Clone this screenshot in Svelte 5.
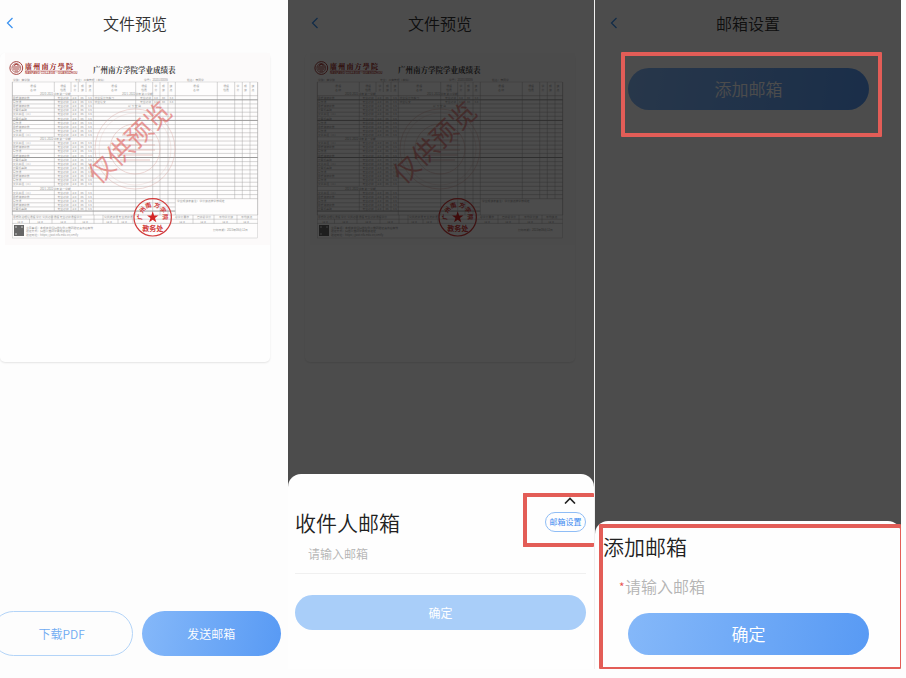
<script>
  let recipient = $state('');
  let newMailbox = $state('');

  const pitch = 4.12;
  const firstRow = 95.7;
  const rowLines = Array.from({ length: 29 }, (_, i) => firstRow + i * pitch);
  const darkLines = [1, 6, 15, 28];
  const columns = [12.3, 54.3, 71, 78.3, 86, 93.3, 135.7, 152.7, 160, 168, 175.3, 217.3, 234.7, 242.3, 250, 257.7];
  const semesterRows = [10, 22];
  const names = ['思想道德修养', '高等数学应用', '大学英语（一）', '计算机基础', '体育一', '军训', '写作课', '管理学基础课', '中国近代史', '大学英语（二）', '专业导论课', '学期合计'];
  const courses = Array.from({ length: 28 }, (_, i) => ({ row: i, name: names[(i * 5 + (i % 3)) % 12] }))
    .filter((c) => !semesterRows.includes(c.row));
  const heads = [33, 114, 196];
  const sealChars = [
    ['广', -88], ['州', -54], ['南', -20], ['方', 20], ['学', 54], ['院', 88]
  ];
</script>

{#snippet back()}
  <button class="back" aria-label="返回">
    <svg width="8" height="12" viewBox="0 0 8 12"><path d="M6.5 1 1.5 6l5 5" /></svg>
  </button>
{/snippet}

{#snippet transcript()}
  <svg class="paper" viewBox="0 53 270 192" role="img" aria-label="广州南方学院学业成绩表">
    <rect x="5" y="53" width="265" height="192" fill="#fcfafa" />
    <rect x="12.3" y="82" width="245.4" height="156" fill="#fefdfd" />

    <g fill="none" stroke="#a5433f">
      <circle cx="16.3" cy="68" r="6.4" stroke-width="1" />
      <circle cx="16.3" cy="68" r="4.4" stroke-width=".7" />
      <path d="M12.5 67h7.600M13 69h6.600M14 65.500l2.300-1.500 2.300 1.500M14.500 71h3.600" stroke-width="1.200" />
    </g>
    {#each ['廣', '州', '南', '方', '學', '院'] as char, i}
      <text x={25 + i * 8.2} y="69" class="brand">{char}</text>
    {/each}
    <path d="M25 71h47" stroke="#b4433f" stroke-width=".5" />
    <text x="25" y="74.300" class="brand-en">NANFANG COLLEGE · GUANGZHOU</text>
    <text x="93" y="72.500" class="doc-title">广州南方学院学业成绩表</text>

    <g class="tiny">
      <text x="13" y="80.500">学院：商学院</text>
      <text x="75" y="80.500">专业：工商管理（本科）</text>
      <text x="144" y="80.500">学号：2020100086</text>
      <text x="187" y="80.500">姓名：李同学</text>
      {#each heads as x}
        <text {x} y="87" text-anchor="middle">课 程</text>
        <text {x} y="90.500" text-anchor="middle">名 称</text>
        <text x={x + 30} y="87" text-anchor="middle">课程</text>
        <text x={x + 30} y="90.500" text-anchor="middle">性质</text>
        {#each [['学', '分'], ['成', '绩'], ['绩', '点']] as pair, i}
          <text x={x + 42 + i * 7.500} y="87" text-anchor="middle">{pair[0]}</text>
          <text x={x + 42 + i * 7.500} y="90.500" text-anchor="middle">{pair[1]}</text>
        {/each}
      {/each}
      <text x="40" y="94.800">2020-2021学年 第一学期</text>
      <text x="122" y="94.800">2021-2022学年 第二学期</text>
      <text x="128" y="107">以 下 空 白</text>
      {#each courses as c}
        <text x="12.800" y={firstRow + c.row * pitch + 3.200}>{c.name}</text>
        <text x="57.500" y={firstRow + c.row * pitch + 3.200}>专业必修</text>
        <text x="72.500" y={firstRow + c.row * pitch + 3.200}>2.0</text>
        <text x="80.500" y={firstRow + c.row * pitch + 3.200}>85</text>
        <text x="88" y={firstRow + c.row * pitch + 3.200}>3.5</text>
      {/each}
      {#each semesterRows as r}
        <text x="40" y={firstRow + r * pitch + 3.200}>2021-2022学年 第一学期</text>
      {/each}
      {#each [0, 1] as r}
        <text x="94.500" y={firstRow + r * pitch + 3.200}>{r ? '毕业论文' : '毕业设计与实习'}</text>
        <text x="140" y={firstRow + r * pitch + 3.200}>专业必修</text>
        <text x="154" y={firstRow + r * pitch + 3.200}>4.0</text>
        <text x="162" y={firstRow + r * pitch + 3.200}>88</text>
        <text x="169.500" y={firstRow + r * pitch + 3.200}>3.8</text>
      {/each}
      <text x="177" y="201.500">学业成绩表备注：学分绩点按学校规定</text>
      <text x="13" y="218.300">思想政治理论课程 学分 公共必修课程 专业必修课程学分</text>
      <text x="104" y="218.300">公共选修课 专业选修课</text>
      <text x="175" y="218.300">总学分要求</text><text x="197" y="218.300">已修总学分</text>
      <text x="219" y="218.300">平均学分绩</text><text x="241" y="218.300">平均绩点</text>
      {#each [20, 40, 63, 85, 109, 124, 182, 203, 225, 246] as x}
        <text {x} y="222.500" text-anchor="middle">12.0</text>
      {/each}
      <text x="26" y="228.500">注意事项：本成绩单经扫描左侧二维码验证真伪后有效</text>
      <text x="26" y="232">验证方式：扫描二维码登录成绩验证</text>
      <text x="26" y="235.500">验证网址：https://jwxt.nfu.edu.cn/verify</text>
      <text x="213" y="230.500">打印日期：2023年06月12日</text>
    </g>

    <g stroke="#9b9999" stroke-width=".4" fill="none">
      <rect x="12.300" y="82" width="245.400" height="156" stroke="#bbb" />
      {#each rowLines as y, i}
        <path d="M12.300 {y}H{i > 25 ? 175.300 : 257.700}" stroke={darkLines.includes(i) ? '#555' : '#989696'} stroke-width={darkLines.includes(i) ? 0.600 : 0.400} />
      {/each}
      {#each columns as x, i}
        {#if i > 0 && i < 5}
          <path d="M{x} 82v10M{x} 95.700v41.200M{x} 141v45.300M{x} 190.500v20.500" />
        {:else}
          <path d="M{x} 82V{i > 10 && i < 15 ? 198.700 : 215}" />
        {/if}
      {/each}
      <path d="M12.300 215h245.400M12.300 219.200h245.400M12.300 223.400h245.400" />
      <path d="M29.500 219v4.400M52 215v8.400M75 219v4.400M94 215v8.400M103 215v8.400M118 219v4.400M133 215v8.400M171 215v8.400M193 215v8.400M214 215v8.400M237 215v8.400" />
    </g>

    <rect x="14" y="225" width="10" height="11" fill="#666" />
    <path d="M15 226h2v2h-2zM21 226h2v2h-2zM15 233h2v2h-2z" fill="#999" />

    <g fill="none" stroke="#d9a6a0" opacity=".4">
      <circle cx="135" cy="149" r="40" stroke-width="1" />
      <circle cx="135" cy="149" r="36" stroke-width=".5" />
      <circle cx="135" cy="149" r="25" stroke-width="1" />
      <path d="M117 140h36M115 145h40M115 150h40M117 155h36M120 160h30M122 135h26" stroke-width="1.500" />
    </g>
    <text class="watermark" transform="translate(130 143) rotate(-44)" text-anchor="middle" y="9">仅供预览</text>

    <g transform="translate(152.700 217.300)">
      <circle r="18.700" fill="none" stroke="#d23c3c" stroke-width="1.200" />
      <path d="M0-6 1.400-1.900h4.300L2.300.7l1.300 4.200L0 2.400l-3.600 2.500 1.300-4.200-3.400-2.600h4.300z" fill="#d32525" />
      {#each sealChars as [char, angle]}
        <text class="seal" transform="rotate({angle})" y="-10.500" text-anchor="middle">{char}</text>
      {/each}
      <text class="seal base" y="13.500" text-anchor="middle">教务处</text>
    </g>
  </svg>
{/snippet}

<main>
  <section class="phone preview">
    <div class="screen">
      <header>{@render back()}<h1>文件预览</h1></header>
      <div class="card">{@render transcript()}</div>
    </div>
    <footer>
      <button class="outline">下载PDF</button>
      <button class="solid">发送邮箱</button>
    </footer>
  </section>

  <section class="phone sending">
    <div class="dimmed">
      <div class="screen">
        <header>{@render back()}<h1>文件预览</h1></header>
        <div class="card">{@render transcript()}</div>
      </div>
    </div>
    <form class="sheet">
      <div class="sheet-head">
        <h2>收件人邮箱</h2>
        <div class="tools">
          <button type="button" class="close" aria-label="关闭">
            <svg width="12" height="7" viewBox="0 0 12 7"><path d="m1 6.500 5-5 5 5" /></svg>
          </button>
          <button type="button" class="settings">邮箱设置</button>
        </div>
      </div>
      <input type="email" aria-label="收件人邮箱" placeholder="请输入邮箱" bind:value={recipient} />
      <button type="button" class="confirm-light">确定</button>
      <span class="mark mark-settings"></span>
    </form>
  </section>

  <section class="phone adding">
    <div class="dimmed">
      <div class="screen">
        <header>{@render back()}<h1>邮箱设置</h1></header>
        <button class="solid large">添加邮箱</button>
      </div>
      <span class="mark mark-add"></span>
    </div>
    <form class="sheet">
      <h2>添加邮箱</h2>
      <label><span class="star">*</span><input type="email" aria-label="邮箱" placeholder="请输入邮箱" bind:value={newMailbox} /></label>
      <button type="button" class="solid large">确定</button>
      <span class="mark mark-form"></span>
    </form>
  </section>
</main>

<style>
  :global(body) {
    margin: 0;
    background: #fdfdfd;
  }
  main {
    box-sizing: border-box;
    min-height: 100vh;
    padding: 0 5px 9px 0;
    display: grid;
    grid-template-columns: 288fr 307fr 306fr;
    overflow: hidden;
    font-family: "Noto Sans CJK SC", sans-serif;
    font-weight: 350;
    color: #333;
  }
  button, input {
    font: inherit;
    border: 0;
    padding: 0;
    background: none;
  }
  h1, h2 {
    margin: 0;
    font-weight: 350;
  }
  .phone {
    min-width: 0;
    display: flex;
    flex-direction: column;
  }
  .dimmed {
    flex: 1;
    position: relative;
    background: #fff;
    margin-bottom: -14px;
    padding-bottom: 14px;
  }
  .dimmed::after {
    content: "";
    position: absolute;
    inset: 0;
    background: rgba(0, 0, 0, 0.7);
  }
  header {
    position: relative;
    height: 46px;
    display: flex;
    align-items: center;
    justify-content: center;
  }
  h1 {
    font-size: 16px;
    line-height: 24px;
  }
  .back {
    position: absolute;
    left: 6px;
    top: 17px;
    display: flex;
  }
  .adding .back {
    left: 15px;
  }
  .back path {
    fill: none;
    stroke: #3d93f0;
    stroke-width: 1.3;
  }
  .preview .screen {
    flex: 1;
    padding-right: 18px;
  }
  .sending {
    border-right: 1px solid #f0f0f0;
  }
  .sending .screen {
    padding: 0 19px 0 17px;
  }
  .card {
    min-height: 309px;
    margin-top: 7px;
    border-radius: 5px;
    background: #fefefe;
    box-shadow: 0 1px 2px rgba(0, 0, 0, 0.1);
  }
  .paper {
    display: block;
    width: 100%;
  }
  .brand {
    font: 900 7px "Noto Serif CJK SC", "Noto Sans CJK SC", serif;
    fill: #a23a37;
  }
  .brand-en {
    font: 700 3px "Liberation Sans", sans-serif;
    fill: #b04a47;
  }
  .doc-title {
    font: 700 7.5px "Noto Serif CJK SC", "Noto Sans CJK SC", serif;
    fill: #444;
  }
  .tiny {
    font-size: 2.8px;
    font-weight: 400;
    fill: #999;
  }
  .watermark {
    font-size: 26px;
    font-weight: 400;
    fill: #e0605c;
    opacity: 0.6;
  }
  .seal {
    font-size: 6px;
    font-weight: 700;
    fill: #d23c3c;
  }
  .base {
    font-size: 7px;
  }
  footer {
    display: flex;
    gap: 9px;
    margin: 0 7px 13px -9px;
  }
  footer button {
    box-sizing: border-box;
    flex: 1 1 0;
    height: 45px;
    border-radius: 23px;
    font-size: 12px;
    line-height: 43px;
  }
  .outline {
    border: 1px solid #b3d4f8;
    color: #6fabf2;
  }
  .solid {
    color: #fff;
    background: linear-gradient(100deg, #85b8f9, #589af4);
  }
  .large {
    display: block;
    height: 42px;
    border-radius: 21px;
    font-size: 17px;
    line-height: 40px;
  }
  .sheet {
    position: relative;
    background: #fefefe;
    border-radius: 13px 13px 0 0;
  }
  h2 {
    font-size: 21px;
    line-height: 32px;
    color: #222;
  }
  .sending .sheet {
    padding: 18px 8px 39px 7px;
  }
  .sheet-head {
    display: flex;
    justify-content: space-between;
    align-items: flex-end;
    height: 46px;
  }
  .tools {
    display: flex;
    flex-direction: column;
    align-items: flex-end;
    gap: 8px;
    align-self: flex-start;
  }
  .close {
    display: flex;
    margin: 5px 10px 0 0;
  }
  .close path {
    fill: none;
    stroke: #222;
    stroke-width: 1.6;
  }
  .settings {
    width: 41px;
    height: 20px;
    flex: none;
    border: 1px solid #8fbdf6;
    border-radius: 10px;
    color: #3c8bf0;
    font-size: 8px;
    font-weight: 400;
    line-height: 18px;
    white-space: nowrap;
  }
  .sending input {
    box-sizing: border-box;
    display: block;
    width: 100%;
    height: 36px;
    padding: 0 13px 4px;
    border-bottom: 1px solid #f0f0f0;
    font-size: 12px;
  }
  input {
    outline: none;
    color: #333;
  }
  input::placeholder {
    color: #b4b4b4;
    opacity: 1;
  }
  .confirm-light {
    display: block;
    width: 100%;
    height: 35px;
    margin-top: 21px;
    border-radius: 18px;
    background: #a9cef9;
    color: #fff;
    font-size: 12px;
    font-weight: 400;
  }
  .adding .screen .large {
    width: calc(100% - 65px);
    margin: 22px 32px 0 33px;
  }
  .adding .sheet {
    padding: 9px 32px 14px 33px;
  }
  .adding h2 {
    margin-left: -25px;
  }
  .adding label {
    display: flex;
    align-items: center;
    height: 48px;
    margin-left: -9px;
    padding-bottom: 3px;
  }
  .adding input {
    flex: 1;
    min-width: 0;
    font-size: 16px;
  }
  .star {
    width: 6px;
    font-size: 12px;
    color: #e8504a;
  }
  .adding .sheet .large {
    width: 100%;
  }
  .mark {
    position: absolute;
    z-index: 1;
    box-sizing: border-box;
    border: 4px solid #e35d57;
    border-radius: 1px;
    pointer-events: none;
  }
  .mark-settings {
    top: 19px;
    right: 0;
    width: 71px;
    height: 54px;
    border-right: 0;
  }
  .mark-add {
    top: 52px;
    left: 26px;
    right: 19px;
    height: 85px;
  }
  .mark-form {
    inset: 3px 0 0 4px;
    border-right-width: 1px;
    border-bottom-width: 2px;
  }
</style>
